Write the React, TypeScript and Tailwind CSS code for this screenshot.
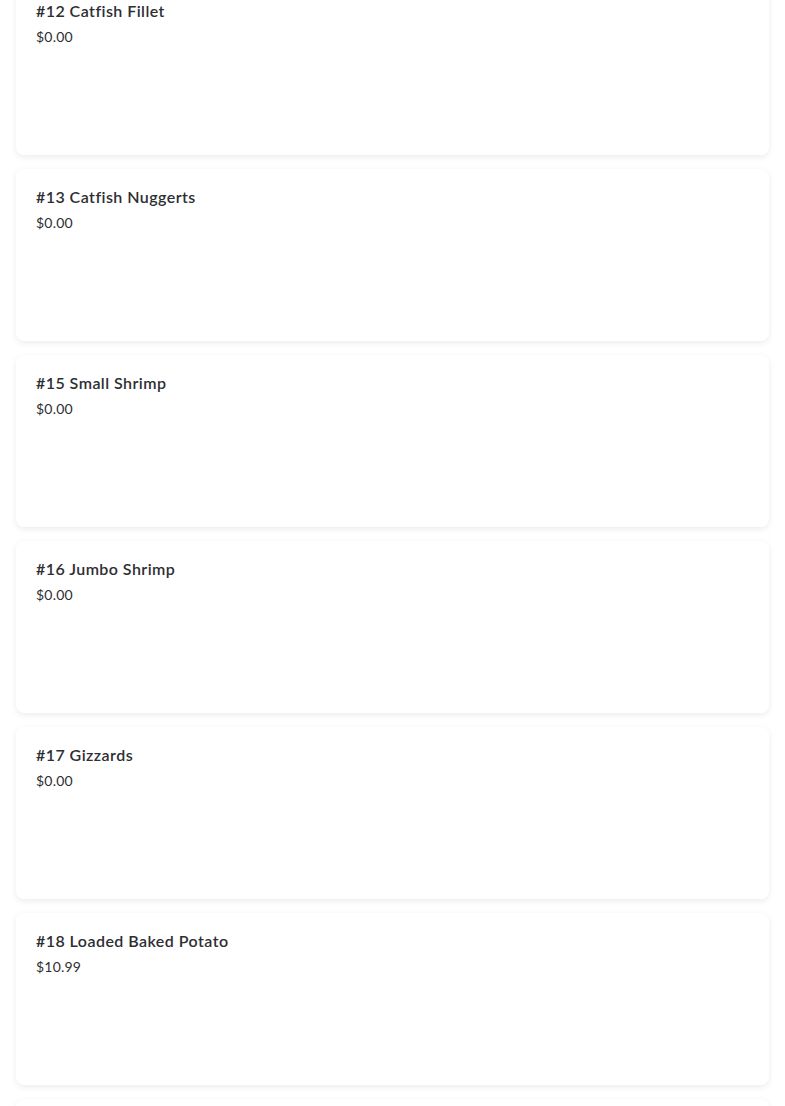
import React from "react";

const items = [
  { name: "#12 Catfish Fillet", price: "$0.00" },
  { name: "#13 Catfish Nuggerts", price: "$0.00" },
  { name: "#15 Small Shrimp", price: "$0.00" },
  { name: "#16 Jumbo Shrimp", price: "$0.00" },
  { name: "#17 Gizzards", price: "$0.00" },
  { name: "#18 Loaded Baked Potato", price: "$10.99" },
];

export default function App() {
  return (
    <div className="h-[1106px] bg-white overflow-hidden" style={{ fontFamily: "Lato, 'Open Sans', sans-serif" }}>
      <div className="-mt-[17px] px-4 flex flex-col gap-[14px]">
        {items.map((item) => (
          <div
            key={item.name}
            className="h-[172px] bg-white rounded-lg px-5 pt-4 shadow-[0_2px_6px_rgba(0,0,0,0.08)]"
          >
            <div className="text-[16px] leading-6 font-semibold text-[#2e2e33] tracking-[0.45px]">{item.name}</div>
            <div className="mt-1 text-[14px] leading-5 text-[#2e2e33] tracking-[0.2px]">{item.price}</div>
          </div>
        ))}
        {/* next card, only its top edge is visible */}
        <div className="h-[172px] bg-white rounded-lg shadow-[0_2px_6px_rgba(0,0,0,0.08)]" />
      </div>
    </div>
  );
}
